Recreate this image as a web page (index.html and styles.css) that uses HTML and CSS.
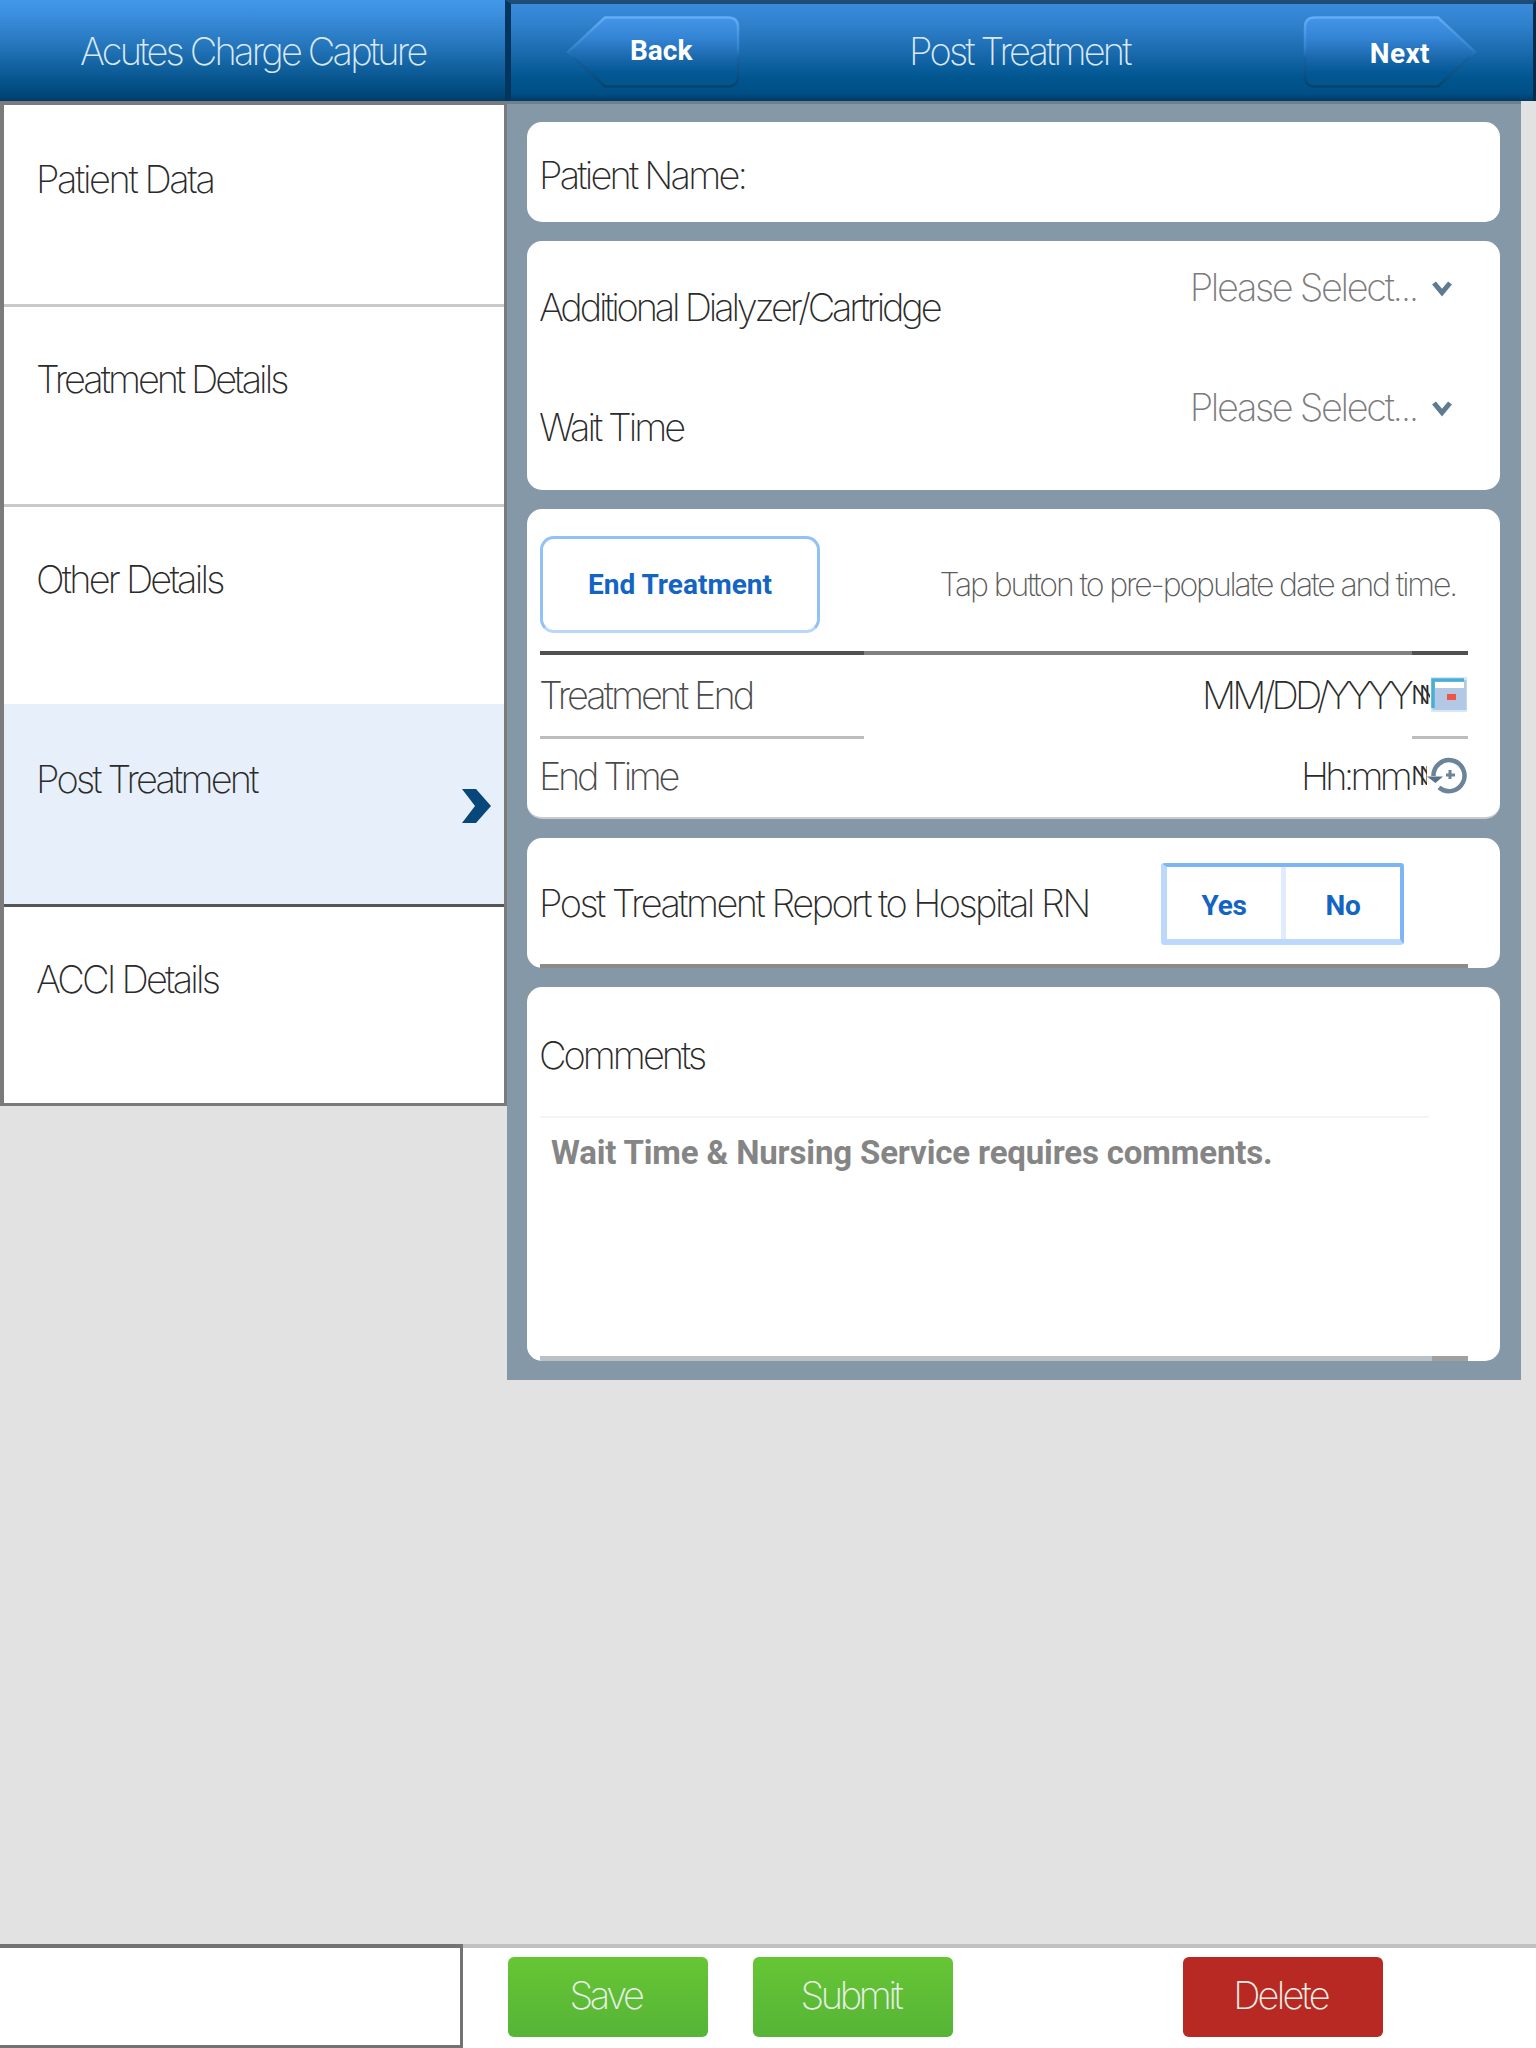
FILE: index.html
```html
<!DOCTYPE html>
<html lang="en">
<head>
<meta charset="utf-8">
<title>Acutes Charge Capture</title>
<link rel="stylesheet" href="styles.css">
</head>
<body>
<div class="app">
  <header class="topbar">
    <div class="topbar-side"><h1 class="title">Acutes Charge Capture</h1></div>
    <div class="topbar-main">
      <button class="nav-btn back">
        <svg width="174" height="72" viewBox="0 0 174 72">
          <defs>
            <linearGradient id="fill" x1="0" y1="0" x2="0" y2="1"><stop offset="0" stop-color="#4395e8"/><stop offset=".3" stop-color="#3484d4"/><stop offset=".55" stop-color="#1e6bb1"/><stop offset=".8" stop-color="#025894"/><stop offset="1" stop-color="#04548a"/></linearGradient>
            <linearGradient id="edge" x1="0" y1="0" x2="0" y2="1"><stop offset="0" stop-color="#62aef5"/><stop offset=".45" stop-color="#2e83cd"/><stop offset=".6" stop-color="#17609f"/><stop offset="1" stop-color="#08436f"/></linearGradient>
          </defs>
          <path d="M39 1.5H162Q172 1.5 172 11V60Q172 70.500 162 70.500H39L2 36Z" fill="url(#fill)" stroke="url(#edge)" stroke-width="2.500"/>
        </svg>
        <span class="nav-label">Back</span>
      </button>
      <h2 class="title">Post Treatment</h2>
      <button class="nav-btn next">
        <svg width="174" height="72" viewBox="0 0 174 72">
          <path d="M135 1.500H12Q2 1.500 2 11V60Q2 70.500 12 70.500H135L172 36Z" fill="url(#fill)" stroke="url(#edge)" stroke-width="2.500"/>
        </svg>
        <span class="nav-label">Next</span>
      </button>
    </div>
  </header>

  <main class="content">
    <nav class="sidebar">
      <a class="item ls-24">Patient Data</a>
      <a class="item ls-30">Treatment Details</a>
      <a class="item">Other Details</a>
      <a class="item selected">Post Treatment
        <svg class="item-arrow" width="31" height="36" viewBox="0 0 31 36"><path d="M1 1H15L30 18L15 35H1L14 18Z" fill="#07477a"/></svg>
      </a>
      <a class="item">ACCI Details</a>
    </nav>

    <section class="panel">
      <div class="card card-name"><span class="label">Patient Name:</span></div>

      <div class="card card-selects">
        <div class="select-row">
          <span class="label ls-32">Additional Dialyzer/Cartridge</span>
          <span class="select">Please Select...<svg width="22" height="20" viewBox="0 0 22 20"><path d="M3 4L11 13.500L19 4" fill="none" stroke="#5f7b92" stroke-width="5"/></svg></span>
        </div>
        <div class="select-row">
          <span class="label ls-30">Wait Time</span>
          <span class="select">Please Select...<svg width="22" height="20" viewBox="0 0 22 20"><path d="M3 4L11 13.500L19 4" fill="none" stroke="#5f7b92" stroke-width="5"/></svg></span>
        </div>
      </div>

      <div class="card card-end">
        <div class="end-row">
          <button class="end-btn">End Treatment</button>
          <span class="hint">Tap button to pre-populate date and time.</span>
        </div>
        <div class="rule rule-dark"><i></i><b></b><i></i></div>
        <div class="field">
          <span class="label muted ls-30">Treatment End</span>
          <span class="value ls-38">MM/DD/YYYY</span><span class="clip">NN</span>
          <svg class="field-icon" width="38" height="38" viewBox="0 0 38 38">
            <rect x="1" y="1" width="36" height="35" fill="#d5e8fa"/>
            <rect x="2.500" y="4" width="34" height="30" fill="#b2c8e5"/>
            <rect x="5" y="6" width="29" height="6" fill="#fff"/>
            <path d="M3 32V4H34" fill="none" stroke="#48aed2" stroke-width="3.500"/>
            <rect x="17" y="18" width="9" height="6" fill="#ef5544"/>
          </svg>
        </div>
        <div class="rule rule-light"><i></i><b></b><i></i></div>
        <div class="field field-time">
          <span class="label muted ls-34">End Time</span>
          <span class="value ls-38">Hh:mm</span><span class="clip">NN</span>
          <svg class="field-icon" width="38" height="38" viewBox="0 0 38 38">
            <path d="M3.500 19A15.500 15.500 0 1 1 9 30.500" fill="none" stroke="#6b8499" stroke-width="4.500"/>
            <path d="M-3 19.500H13L5.500 26Z" fill="#54728a"/>
            <path d="M20 13V22M16 18H25" fill="none" stroke="#6b8499" stroke-width="3"/>
          </svg>
        </div>
      </div>

      <div class="card card-report">
        <span class="label ls-25">Post Treatment Report to Hospital RN</span>
        <div class="toggle"><button>Yes</button><button>No</button></div>
      </div>

      <div class="card card-comments">
        <div class="comments-head"><span class="label ls-30">Comments</span></div>
        <p class="comments-text">Wait Time &amp; Nursing Service requires comments.</p>
        <div class="comments-foot"></div>
      </div>
    </section>
  </main>

  <footer class="bottombar">
    <div class="status"></div>
    <div class="actions">
      <button class="action green ls-34">Save</button>
      <button class="action green ls-34">Submit</button>
      <button class="action red">Delete</button>
    </div>
  </footer>
</div>
</body>
</html>
```
FILE: styles.css
```css
* { box-sizing: border-box; }
body { margin: 0; background: #e2e2e2; }
button { margin: 0; padding: 0; border: 0; background: none; font: inherit; color: inherit; letter-spacing: inherit; }
svg { display: block; flex: none; overflow: visible; }

.app {
  width: 1536px;
  height: 2048px;
  display: flex;
  flex-direction: column;
  font: 200 38px/40px Inter, "Liberation Sans", sans-serif;
  letter-spacing: -2.8px;
  color: #2b2b2b;
  white-space: nowrap;
  overflow: hidden;
}

.ls-24 { letter-spacing: -2.4px; }
.ls-25 { letter-spacing: -2.55px; }
.ls-30 { letter-spacing: -3px; }
.ls-32 { letter-spacing: -3.2px; }
.ls-34 { letter-spacing: -3.4px; }
.ls-38 { letter-spacing: -3.8px; }

/* Top bar */
.topbar { display: flex; height: 101px; flex: none; color: #dbe8f4; }
.title { margin: 0; font: inherit; }
.topbar-side {
  width: 505px;
  padding: 31px 0 0 80px;
  background: linear-gradient(#4398ea 0, #3c8fdf 14%, #2273b8 48%, #07568f 78%, #004475 96%, #003d68 100%);
}
.topbar-main {
  flex: 1;
  display: flex;
  align-items: flex-start;
  padding: 12px 0 0 55px;
  border: solid #1f4b77;
  border-width: 4px 3px 0 6px;
  border-left-color: #04355f;
  border-right-color: #032c4c;
  background: linear-gradient(#3a8bdb 0, #2f80cb 22%, #1a6aae 50%, #00568f 76%, #004f86 92%, #003b66 100%);
}
.topbar-main .title { margin: 15px 173px 0 169px; }
.nav-btn { display: grid; font: 700 28px/28px Roboto, sans-serif; letter-spacing: 0; color: #fff; text-align: left; }
.nav-btn > * { grid-area: 1 / 1; }
.nav-label { padding: 21px 0 0 64px; }
.next .nav-label { padding: 24px 0 0 67px; letter-spacing: .4px; }

/* Body */
.content { flex: 1; display: flex; align-items: flex-start; }

.sidebar { width: 507px; border: solid #7b7b7b; border-width: 4px 3px 3px 4px; background: #fff; }
.item {
  display: flex;
  justify-content: space-between;
  height: 200px;
  padding: 52px 12px 0 32px;
  border-bottom: 3px solid #c9c9c9;
}
.item:first-child { height: 202px; padding-top: 54px; }
.item:nth-child(3) { border-bottom-color: #e7effa; }
.item.selected { background: #e7effa; border-bottom-color: #555; }
.item:last-child { border-bottom: 0; height: 196px; }
.item-arrow { margin-top: 29px; }

.panel {
  width: 1014px;
  height: 1279px;
  padding: 18px 21px 18px 20px;
  display: flex;
  flex-direction: column;
  gap: 19px;
  border-top: 3px solid #71808e;
  background: #8598a8;
}
.card { background: #fff; border-radius: 15px; padding: 0 32px 0 10px; overflow: hidden; flex: none; }
.label { padding-left: 2px; }
.muted { color: #4a4a4a; }

.card-name { height: 100px; padding-top: 33px; }

.card-selects { height: 249px; padding-top: 26px; }
.select-row { display: flex; justify-content: space-between; height: 120px; padding-right: 15px; }
.select-row .label { padding-top: 20px; }
.select { display: flex; gap: 14px; letter-spacing: -2.35px; color: #7c7c7c; }
.select svg { margin-top: 12px; }

.card-end { height: 310px; padding: 26px 32px 0 13px; border-bottom: 2px solid #c8cccf; }
.card-end .label { padding-left: 0; margin-left: -1px; }
.end-row { display: flex; justify-content: space-between; align-items: center; height: 98px; padding-right: 12px; }
.end-btn {
  width: 280px;
  height: 97px;
  padding-top: 2px;
  border: 3px solid #92c1f8;
  border-bottom-color: #bad7fb;
  border-radius: 14px;
  font: 700 28px/28px Roboto, sans-serif;
  letter-spacing: 0;
  color: #1464c4;
}
.hint { padding-top: 2px; font-size: 32px; letter-spacing: -2.13px; color: #5c5c5c; }
.rule { display: grid; grid-template-columns: 324px 1fr 56px; height: 4px; }
.rule-dark { margin-top: 18px; }
.rule-dark i { background: #505050; }
.rule-dark b { background: #808080; }
.rule-light { height: 3px; }
.rule-light i { background: #bdbdbd; }
.field { display: flex; align-items: center; height: 81px; padding-bottom: 1px; }
.field-time { height: 74px; padding: 0; }
.field .label { flex: 1; }
.clip { width: 19px; margin-left: 1px; overflow: hidden; font-size: 26px; font-weight: 300; letter-spacing: -12px; }
.field-time .clip { width: 16px; margin: 0 3px 0 2px; }

.card-report {
  height: 130px;
  display: flex;
  justify-content: space-between;
  padding: 25px 96px 0 10px;
  background: linear-gradient(#8d8b89, #8d8b89) 13px 126px / 928px 4px no-repeat #fff;
}
.card-report .label { padding-top: 20px; }
.toggle { display: flex; width: 243px; height: 82px; border: solid #7db6f7; border-width: 4px 4px 6px 6px; border-left-color: #bcd9fc; border-bottom-color: #bcd9fc; border-radius: 4px; }
.toggle button { flex: 1; padding-top: 6px; font: 700 28px/28px Roboto, sans-serif; letter-spacing: -.4px; color: #1464c4; }
.toggle button + button { border-left: 5px solid #dfecfe; }

.card-comments { height: 374px; display: flex; flex-direction: column; }
.comments-head { height: 131px; width: 889px; padding-top: 48px; border-bottom: 2px solid #f4f4f4; margin-left: 3px; }
.comments-head .label { margin-left: -3px; }
.comments-text { margin: 15px 0 0 14px; font: 700 33px/40px Roboto, sans-serif; letter-spacing: -.15px; color: #858585; }
.comments-foot { margin: auto 0 0 3px; height: 5px; background: linear-gradient(90deg, #b9c1c6 892px, #a0a0a0 892px); }

/* Bottom bar */
.bottombar { display: flex; height: 104px; flex: none; background: #fff; }
.status { width: 463px; border: solid #737373; border-width: 4px 3px 3px 0; }
.actions { flex: 1; display: flex; padding: 9px 0 0 45px; border-top: 4px solid #c1c1c1; }
.action { width: 200px; height: 80px; padding: 0 5px 4px 0; border-radius: 6px; color: #e9efe6; }
.green { margin-right: 45px; background: linear-gradient(#66c634, #56b437); }
.red { margin-left: 185px; background: #b72922; }
```
